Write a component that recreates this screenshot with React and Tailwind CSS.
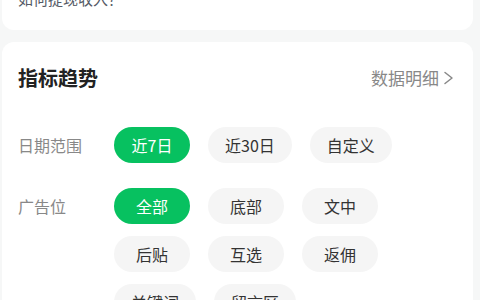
const dateOptions = ['近7日', '近30日', '自定义'];
const adOptions = ['全部', '底部', '文中', '后贴', '互选', '返佣', '关键词', '留言区'];

function Chip({ label, active }) {
  return (
    <button
      className={
        'h-[36px] min-w-[76px] px-[17px] rounded-full text-[16px] leading-none flex items-center justify-center ' +
        (active ? 'bg-[#07c160] text-white' : 'bg-[#f5f5f5] text-[#333333]')
      }
    >
      {label}
    </button>
  );
}

function FilterRow({ label, options, active }) {
  return (
    <div className="flex items-start">
      <div className="w-[96px] shrink-0 h-[36px] flex items-center text-[16px] text-[#888888]">{label}</div>
      <div className="flex flex-wrap gap-x-[18px] gap-y-[12px] w-[290px]">
        {options.map((o) => (
          <Chip key={o} label={o} active={o === active} />
        ))}
      </div>
    </div>
  );
}

export default function App() {
  return (
    <div
      className="w-[480px] h-[300px] overflow-hidden bg-[#f6f7f7] pl-[2px] pr-[7px]"
      style={{ fontFamily: '"Noto Sans CJK SC", "Noto Sans", sans-serif' }}
    >
      {/* previous card, scrolled mostly out of view */}
      <div className="-mt-[12px] bg-white rounded-[12px] px-[16px] pb-[20px]">
        <p className="text-[15px] leading-[22px] text-[#555b66]">如何提现收入？</p>
      </div>

      {/* Trend card */}
      <div className="mt-[12px] bg-white rounded-[12px] px-[16px] pt-[22px] pb-[20px]">
        <div className="flex items-center justify-between">
          <h2 className="text-[20px] leading-[28px] font-bold text-[#222222]">指标趋势</h2>
          <div className="flex items-center text-[17px] text-[#888888] pr-[2px]">
            数据明细
            <svg className="ml-[4px]" width="12" height="14" viewBox="0 0 12 14" fill="none">
              <polyline points="2,1.5 9,7 2,12.5" stroke="#888888" strokeWidth="1.5" strokeLinecap="round" strokeLinejoin="round" />
            </svg>
          </div>
        </div>

        <div className="mt-[35px] flex flex-col gap-[25px]">
          <FilterRow label="日期范围" options={dateOptions} active="近7日" />
          <FilterRow label="广告位" options={adOptions} active="全部" />
        </div>
      </div>
    </div>
  );
}
